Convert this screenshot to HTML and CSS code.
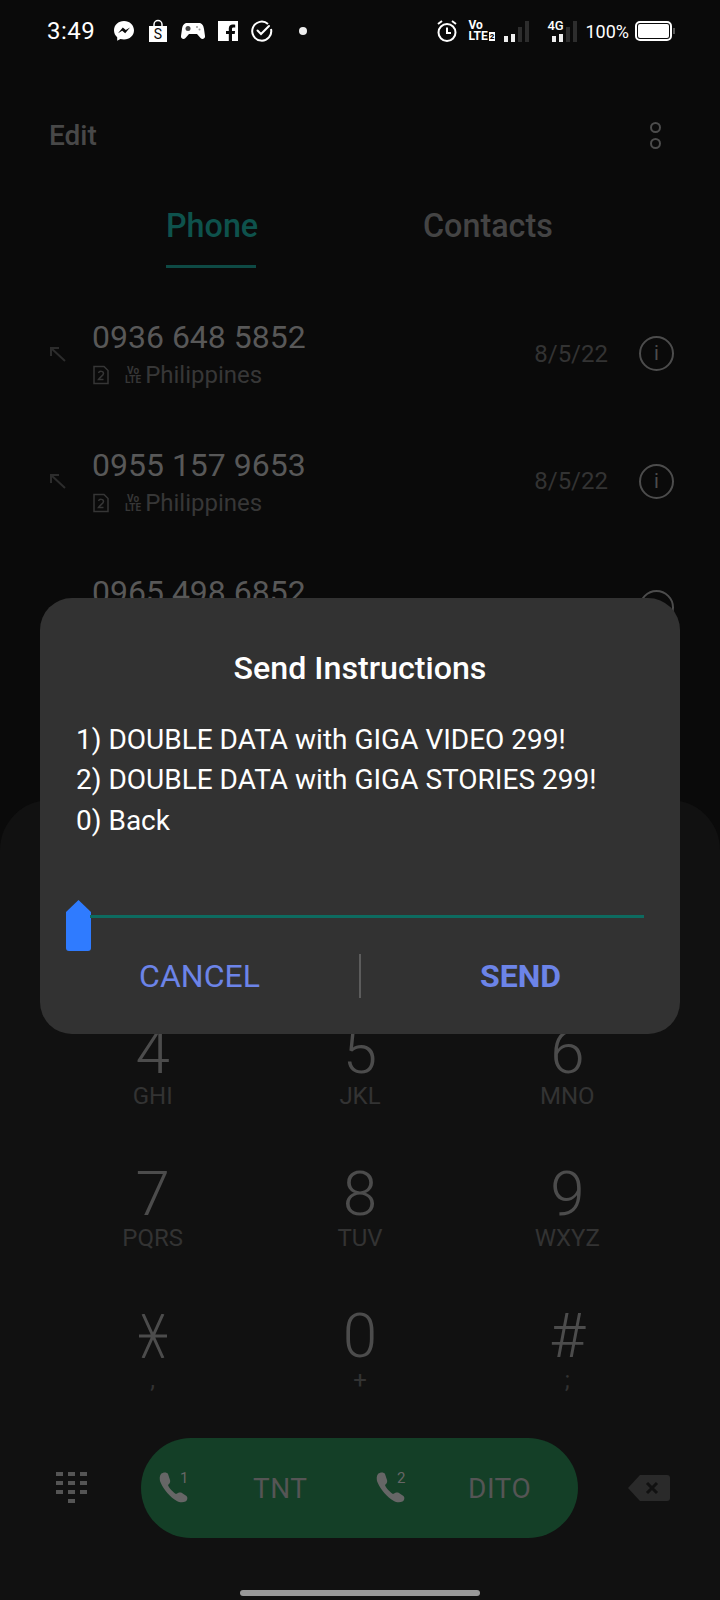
FILE: index.html
```html
<!DOCTYPE html>
<html lang="en">
<head>
  <meta charset="UTF-8">
  <title>Phone - Send Instructions</title>
  <link rel="stylesheet" href="styles.css">
</head>
<body>
  <div class="screen">
    <div class="statusbar">
      <span class="clock">3:49</span>
      <div class="notif-icons">
        <svg width="22" height="22" viewBox="0 0 22 22"><path fill="#fff" d="M11 1C5.300 1 1 5 1 10.300c0 2.900 1.200 5.300 3.200 7v3.500l3.200-1.800c1.100.3 2.300.5 3.600.5 5.700 0 10-4 10-9.200S16.700 1 11 1z"/><path fill="#0a0a0a" d="M5 13.300l4.800-5.700 3 2.500 4.200-2.500-4.800 5.700-3-2.500z"/></svg>
        <svg width="20" height="24" viewBox="0 0 20 24"><path fill="none" stroke="#fff" stroke-width="1.500" d="M6 8V5.500a4 4 0 0 1 8 0V8"/><path fill="#fff" d="M1 7h18v16H1z"/><text x="10" y="20" text-anchor="middle" class="shop-s">S</text></svg>
        <svg width="24" height="20" viewBox="0 0 24 20"><path fill="#fff" d="M6 2h12c3 0 4.500 2.500 5 6l1 7c.3 2.500-2.500 4-4.500 2L16 13H8l-3.500 4c-2 2-4.800.5-4.500-2l1-7c.5-3.500 2-6 5-6z"/><circle cx="7" cy="7.500" r="2.500" fill="#444"/><circle cx="16" cy="6" r="1" fill="#999"/><circle cx="18.500" cy="8.500" r="1" fill="#999"/></svg>
        <svg width="20" height="20" viewBox="0 0 20 20"><path fill="#fff" d="M0 0h20v20H14v-7h2.700l.4-3H14V8c0-1 .4-1.500 1.500-1.500H17.200V3.700c-.5-.1-1.500-.2-2.500-.2-2.300 0-3.900 1.400-3.900 4V10H8v3h2.800v7H0z"/></svg>
        <svg width="22" height="22" viewBox="0 0 22 22" fill="none" stroke="#fff" stroke-width="2"><path d="M17 4a9.500 9.500 0 1 0 3 5"/><path d="M6.500 10.500l3.500 3.500 8-8" stroke-linecap="round"/></svg>
        <span class="dot"></span>
      </div>
      <div class="system-icons">
        <svg width="22" height="24" viewBox="0 0 22 24" fill="none" stroke="#fff" stroke-width="2"><circle cx="11" cy="13.500" r="8.500"/><path d="M11 8.500v5.500h4M2 5l4-3M20 5l-4-3"/></svg>
        <div class="volte"><span>Vo</span><span class="volte-lte">LTE<b>2</b></span></div>
        <div class="signal sig-first"><i class="on h1"></i><i class="on h2"></i><i class="h3"></i><i class="h4"></i></div>
        <div class="signal-4g">
          <span class="net">4G</span>
          <div class="signal"><i class="on h1"></i><i class="on h2"></i><i class="h3"></i><i class="h4"></i></div>
        </div>
        <span class="battery-text">100%</span>
        <div class="battery"><div class="battery-fill"></div></div>
      </div>
    </div>

    <div class="topbar">
      <span class="edit">Edit</span>
      <div class="more"><i></i><i></i></div>
    </div>

    <div class="tabs">
      <div class="tab tab-active">Phone</div>
      <div class="tab">Contacts</div>
    </div>

    <div class="calls">
      <div class="call">
        <svg class="call-arrow" width="18" height="18" viewBox="0 0 18 18" fill="none" stroke="#2c2c2c" stroke-width="2"><path d="M16 16L2 3M2 11V3h8"/></svg>
        <div class="call-main">
          <div class="call-number">0936 648 5852</div>
          <div class="call-sub">
            <svg width="18" height="20" viewBox="0 0 18 20" fill="none" stroke="#363636" stroke-width="1.500"><path d="M2 1.500h10l4 4v13H2z"/><path d="M6.500 8c1-2.500 5-2 5 .5 0 2-3.500 3.500-5 6h5"/></svg>
            <div class="mini-volte"><span>Vo</span><span>LTE</span></div>
            <span>Philippines</span>
          </div>
        </div>
        <span class="call-date">8/5/22</span>
        <div class="info">i</div>
      </div>
      <div class="call">
        <svg class="call-arrow" width="18" height="18" viewBox="0 0 18 18" fill="none" stroke="#2c2c2c" stroke-width="2"><path d="M16 16L2 3M2 11V3h8"/></svg>
        <div class="call-main">
          <div class="call-number">0955 157 9653</div>
          <div class="call-sub">
            <svg width="18" height="20" viewBox="0 0 18 20" fill="none" stroke="#363636" stroke-width="1.500"><path d="M2 1.500h10l4 4v13H2z"/><path d="M6.500 8c1-2.500 5-2 5 .5 0 2-3.500 3.500-5 6h5"/></svg>
            <div class="mini-volte"><span>Vo</span><span>LTE</span></div>
            <span>Philippines</span>
          </div>
        </div>
        <span class="call-date">8/5/22</span>
        <div class="info">i</div>
      </div>
      <div class="call call-cut">
        <div class="call-main">
          <div class="call-number">0965 498 6852</div>
        </div>
        <div class="info info-cut"></div>
      </div>
    </div>

    <div class="dialer">
      <div class="keys">
        <div class="key"><span class="digit">4</span><span class="letters">GHI</span></div>
        <div class="key"><span class="digit">5</span><span class="letters">JKL</span></div>
        <div class="key"><span class="digit">6</span><span class="letters">MNO</span></div>
        <div class="key"><span class="digit">7</span><span class="letters">PQRS</span></div>
        <div class="key"><span class="digit">8</span><span class="letters">TUV</span></div>
        <div class="key"><span class="digit">9</span><span class="letters">WXYZ</span></div>
        <div class="key">
          <span class="digit"><svg width="28" height="44" viewBox="0 0 28 44" fill="none" stroke="#4c4c4c" stroke-width="3"><path d="M4 0l20 44M24 0L4 44M0 22h28"/></svg></span>
          <span class="letters">,</span>
        </div>
        <div class="key"><span class="digit">0</span><span class="letters">+</span></div>
        <div class="key"><span class="digit">#</span><span class="letters">;</span></div>
      </div>

      <div class="actions">
        <svg class="keypad-icon" width="36" height="32" viewBox="0 0 36 32" fill="#555"><path d="M2 0h7v4H2zM14 0h7v4h-7zM26 0h7v4h-7zM2 9h7v4H2zM14 9h7v4h-7zM26 9h7v4h-7zM2 18h7v4H2zM14 18h7v4h-7zM26 18h7v4h-7zM14 27h7v4h-7z"/></svg>
        <div class="call-btn">
          <div class="sim">
            <svg width="34" height="34" viewBox="0 0 34 34"><path fill="#666" d="M3 3c2-2 6-2 7 0l2 6c.5 1.500 0 3-1 4l-1 1c1 3 5 7 8 9l2-1c1.500-.7 3-.5 4 0l4.500 3c1.500 1.500 1 4.500-1 5.500-3 1.500-7 1-11-2C10 24 4 16 2 10 1.500 7 1.500 5 3 3z"/></svg>
            <span class="sim-no">1</span>
            <span class="sim-name">TNT</span>
          </div>
          <div class="sim">
            <svg width="34" height="34" viewBox="0 0 34 34"><path fill="#666" d="M3 3c2-2 6-2 7 0l2 6c.5 1.500 0 3-1 4l-1 1c1 3 5 7 8 9l2-1c1.500-.7 3-.5 4 0l4.500 3c1.500 1.500 1 4.500-1 5.500-3 1.500-7 1-11-2C10 24 4 16 2 10 1.500 7 1.500 5 3 3z"/></svg>
            <span class="sim-no">2</span>
            <span class="sim-name sim-name-last">DITO</span>
          </div>
        </div>
        <svg class="backspace" width="42" height="26" viewBox="0 0 42 26"><path fill="#2a2a2a" d="M12 0h27a3 3 0 0 1 3 3v20a3 3 0 0 1-3 3H12L0 13z"/><path stroke="#111" stroke-width="3" d="M19 8l10 10M29 8L19 18"/></svg>
      </div>
      <div class="home-bar"></div>
    </div>

    <div class="dialog">
      <h2 class="dialog-title">Send Instructions</h2>
      <div class="dialog-msg">
        <div>1) DOUBLE DATA with GIGA VIDEO 299!</div>
        <div>2) DOUBLE DATA with GIGA STORIES 299!</div>
        <div>0) Back</div>
      </div>
      <div class="field">
        <svg class="cursor-handle" width="25" height="51" viewBox="0 0 25 51"><path fill="#2f7bff" d="M12.500 0L25 12v36a3 3 0 0 1-3 3H3a3 3 0 0 1-3-3V12z"/></svg>
        <div class="field-line"></div>
      </div>
      <div class="dialog-btns">
        <div class="btn">CANCEL</div>
        <div class="btn-sep"></div>
        <div class="btn btn-strong">SEND</div>
      </div>
    </div>
  </div>
</body>
</html>
```

FILE: styles.css
```css
* { box-sizing: border-box; }
html, body { margin: 0; padding: 0; }
body { width: 720px; height: 1600px; overflow: hidden; background-color: #0a0a0a; font-family: Roboto, "Liberation Sans", sans-serif; }
.screen { position: relative; width: 720px; height: 1600px; display: flex; flex-direction: column; overflow: hidden; }

.statusbar { height: 62px; padding: 0 48px 0 47px; display: flex; align-items: center; color: #fff; flex: none; }
.clock { font-size: 24px; letter-spacing: .5px; width: 66px; }
.notif-icons { display: flex; align-items: center; gap: 13px; }
.shop-s { font: 14px Roboto, sans-serif; fill: #0a0a0a; }
.dot { width: 8px; height: 8px; border-radius: 50%; background: #eee; margin-left: 13px; }
.system-icons { margin-left: auto; display: flex; align-items: center; }
.volte { display: flex; flex-direction: column; font-size: 12px; font-weight: 700; line-height: 11px; margin-left: 10px; width: 26px; }
.volte-lte { display: flex; align-items: center; gap: 1px; }
.volte-lte b { background: #fff; color: #0a0a0a; font-size: 8px; line-height: 9px; padding: 0 1px; }
.signal { display: flex; align-items: flex-end; gap: 3px; height: 22px; }
.signal i { width: 4px; background: #2d2d2d; display: block; }
.signal i.on { background: #eee; }
.signal .h1 { height: 6px; }
.signal .h2 { height: 8px; }
.signal .h3 { height: 15px; }
.signal .h4 { height: 21px; }
.sig-first { margin-left: 10px; }
.signal-4g { position: relative; margin-left: 13px; padding-left: 10px; }
.net { position: absolute; left: 5px; top: -1px; font-size: 13px; font-weight: 500; line-height: 13px; }
.battery-text { font-size: 18px; margin-left: 8px; }
.battery { width: 37px; height: 20px; border: 2px solid #fff; border-radius: 5px; padding: 1px; margin-left: 6px; position: relative; }
.battery-fill { height: 100%; background: #fff; border-radius: 2px; }
.battery::after { content: ""; position: absolute; right: -5px; top: 5px; width: 2px; height: 6px; background: #555; }

.topbar { height: 55px; margin-top: 46px; padding: 0 49px; display: flex; align-items: center; justify-content: space-between; flex: none; }
.edit { font-size: 28px; font-weight: 500; color: #484848; }
.more { display: flex; flex-direction: column; gap: 5px; padding-right: 10px; }
.more i { display: block; width: 11px; height: 11px; border: 2px solid #4c4c4c; border-radius: 50%; }

.tabs { display: flex; padding-left: 166px; gap: 167px; flex: none; height: 74px; margin-top: 31px; }
.tab { font-size: 32.3px; font-weight: 500; color: #444; line-height: 65px; height: 74px; }
.tab-active { color: #0e524c; border-bottom: 3px solid #0e4a45; width: 90px; white-space: nowrap; }

.calls { flex: 1; overflow: hidden; padding-top: 22px; }
.call { height: 127.500px; padding: 0 46px 0 49px; display: flex; align-items: center; }
.call-cut { align-items: flex-start; padding-top: 26px; padding-left: 92px; }
.call-arrow { flex: none; margin-right: 25px; }
.call-main { flex: 1; }
.call-number { font-size: 32px; color: #585858; line-height: 42px; }
.call-sub { display: flex; align-items: center; font-size: 24px; color: #373737; line-height: 32px; margin-top: 1px; }
.call-sub svg { margin-right: 15px; }
.mini-volte { display: flex; flex-direction: column; font-size: 10px; line-height: 9px; font-weight: 700; text-align: center; margin-right: 4px; }
.call-date { font-size: 24px; color: #333; margin-right: 31px; }
.info { width: 35px; height: 35px; border: 2px solid #4c4c4c; border-radius: 50%; color: #4c4c4c; font-size: 20px; line-height: 31px; text-align: center; }
.info-cut { margin-top: 19px; }

.dialer { height: 800px; flex: none; background: #111; border-radius: 50px 50px 0 0; position: relative; display: flex; flex-direction: column; }
.keys { display: grid; grid-template-columns: repeat(3, 1fr); grid-auto-rows: 142px; padding: 0 49px; margin-top: 222px; }
.key { display: flex; flex-direction: column; align-items: center; }
.digit { font-size: 62px; font-weight: 300; line-height: 60px; color: #4c4c4c; height: 60px; display: flex; align-items: center; }
.letters { font-size: 24px; color: #333; line-height: 28px; height: 28px; }
.actions { display: flex; align-items: center; height: 100px; padding-left: 54px; position: absolute; top: 638px; left: 0; right: 0; }
.keypad-icon { flex: none; }
.call-btn { margin-left: 51px; width: 437px; height: 100px; border-radius: 50px; background: #143f27; display: flex; align-items: center; padding-left: 17px; }
.sim { width: 217px; flex: none; display: flex; align-items: center; position: relative; }
.sim-no { position: absolute; left: 22px; top: -2px; font-size: 15px; color: #666; }
.sim-name { font-size: 28px; color: #555; margin-left: 61px; letter-spacing: .5px; }
.sim-name-last { margin-left: 59px; }
.backspace { margin-left: 50px; flex: none; }
.home-bar { position: absolute; left: 240px; top: 790px; width: 240px; height: 6px; border-radius: 3px; background: #999; }

.dialog { position: absolute; left: 40px; top: 598px; width: 640px; height: 436px; background: #323232; border-radius: 32px; padding: 0 36px; }
.dialog-title { margin: 48px 0 0; font-size: 32.2px; line-height: 44px; font-weight: 500; color: #fff; text-align: center; }
.dialog-msg { margin-top: 30px; font-size: 28px; line-height: 40.300px; color: #fff; }
.field { position: absolute; left: 26px; right: 36px; top: 302px; height: 51px; }
.cursor-handle { position: absolute; left: 0; top: 0; }
.field-line { position: absolute; left: 24px; right: 0; top: 15px; height: 3px; background: #0d6b60; }
.dialog-btns { position: absolute; left: 0; right: 0; top: 356px; height: 44px; display: flex; align-items: center; }
.btn { flex: 1; text-align: center; font-size: 32px; color: #6c84e8; }
.btn-strong { font-weight: 700; }
.btn-sep { width: 2px; height: 44px; background: #5c5c5c; flex: none; }
```
